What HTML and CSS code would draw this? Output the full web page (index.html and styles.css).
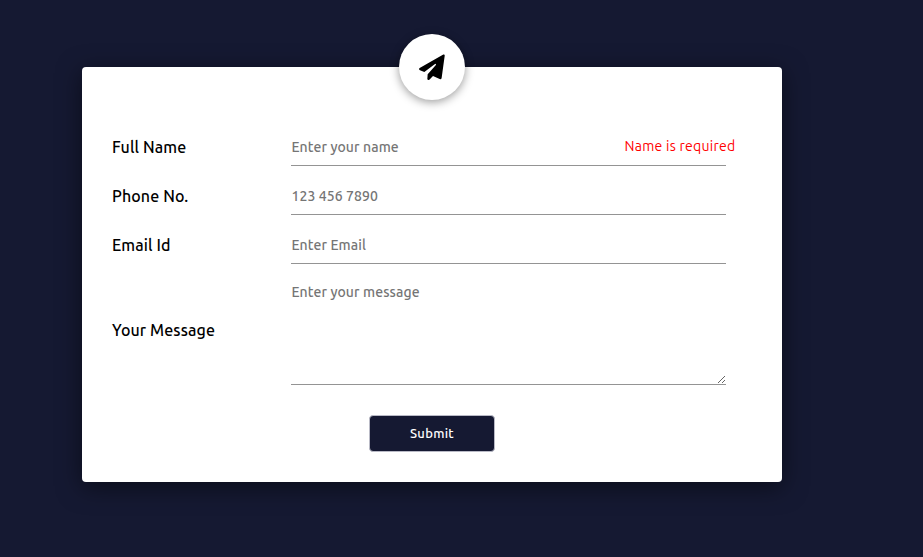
FILE: index.html
```html
<!DOCTYPE html>
<html lang="en">
<head>
  <meta charset="utf-8">
  <title>Contact</title>
  <link rel="stylesheet" href="styles.css">
</head>
<body>
  <form class="card">
    <div class="badge">
      <svg class="plane" viewBox="42 42 78 78" aria-hidden="true"><path d="M115 43.500L44 84Q40 88 45 91L58 96L89 73Q95 69 92 76L68 103L67 117Q68 121 73 119L84 108L104 117Q109 119 110 113L119 48Q120 42 115 43.500Z"/></svg>
    </div>
    <div class="row">
      <label class="label" for="name">Full Name</label>
      <div class="control">
        <input class="field" id="name" type="text" placeholder="Enter your name">
        <span class="error">Name is required</span>
      </div>
    </div>
    <div class="row">
      <label class="label" for="phone">Phone No.</label>
      <div class="control"><input class="field" id="phone" type="text" placeholder="123 456 7890"></div>
    </div>
    <div class="row">
      <label class="label" for="email">Email Id</label>
      <div class="control"><input class="field" id="email" type="text" placeholder="Enter Email"></div>
    </div>
    <div class="row">
      <label class="label" for="message">Your Message</label>
      <div class="control"><textarea class="field message" id="message" placeholder="Enter your message"></textarea></div>
    </div>
    <button class="submit" type="button">Submit</button>
  </form>
</body>
</html>
```
FILE: styles.css
```css
* {
  box-sizing: border-box;
}

body {
  margin: 0;
  height: 557px;
  overflow: hidden;
  padding: 67px 0 0 82px;
  background: #151932;
  font-family: Ubuntu, "Noto Sans", sans-serif;
}

.card {
  position: relative;
  display: flex;
  flex-direction: column;
  gap: 12px;
  width: 700px;
  height: 415px;
  padding: 62px 30px 0;
  background: #fff;
  border-radius: 4px;
  box-shadow: 0 5px 25px rgba(0, 0, 0, 0.5);
}

.badge {
  position: absolute;
  top: -33px;
  left: 317px;
  display: flex;
  align-items: center;
  justify-content: center;
  width: 66px;
  height: 66px;
  border-radius: 50%;
  background: #fff;
  box-shadow: 0 2px 10px rgba(0, 0, 0, 0.4);
}

.plane {
  width: 26px;
  height: 26px;
}

.row {
  display: grid;
  grid-template-columns: 179px 435px;
  align-items: center;
}

.label {
  padding-bottom: 2px;
  font-size: 16px;
  font-weight: 500;
  line-height: 20px;
  letter-spacing: 0.12px;
  color: #000;
}

.control {
  position: relative;
  display: flex;
}

.field {
  display: block;
  width: 435px;
  height: 37px;
  margin: 0;
  padding: 0 0 0 0.4px;
  border: 0;
  border-bottom: 1px solid #949494;
  outline: 0;
  background: transparent;
  font-family: inherit;
  font-size: 14px;
  font-weight: 500;
  letter-spacing: 0.1px;
}

.field::placeholder {
  color: #757575;
  opacity: 1;
}

.message {
  height: 109px;
  padding-top: 8px;
  resize: vertical;
}

.error {
  position: absolute;
  top: 7px;
  right: -9.5px;
  font-size: 14px;
  line-height: 20px;
  letter-spacing: 0.27px;
  white-space: nowrap;
  color: #f00;
}

.submit {
  align-self: center;
  width: 126px;
  height: 37px;
  margin-top: 18px;
  padding: 0 0 1px;
  border: 1px solid #b9bac6;
  border-radius: 4px;
  background: #151932;
  color: #fff;
  font-family: inherit;
  font-size: 13px;
  font-weight: 500;
  letter-spacing: 0.3px;
}
```
